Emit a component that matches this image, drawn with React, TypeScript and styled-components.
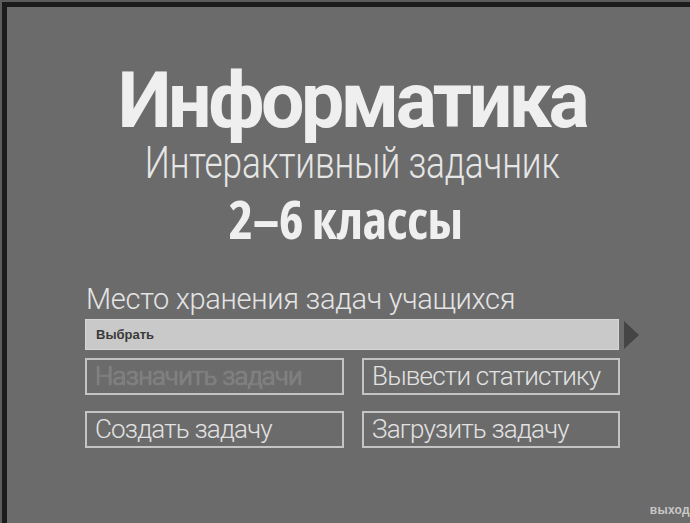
import React from "react";
import styled, { createGlobalStyle } from "styled-components";

const Global = createGlobalStyle`
  html, body { margin: 0; padding: 0; background: #4f4f4f; }
  body { width: 690px; height: 523px; overflow: hidden; }
  #root { width: 690px; height: 523px; }
`;

const Outer = styled.div`
  width: 690px;
  height: 523px;
  box-sizing: border-box;
  padding: 2px 0 0 2px;
  background: #5c5c5c;
`;

const Screen = styled.div`
  height: 100%;
  box-sizing: border-box;
  border-top: 5px solid #1b1b1b;
  border-left: 5px solid #1b1b1b;
  background: #6b6b6b;
  display: flex;
  flex-direction: column;
  font-family: Roboto, "Liberation Sans", sans-serif;
  color: #ececec;
`;

const Heading = styled.header`
  display: flex;
  flex-direction: column;
  align-items: center;
  padding-top: 55px;
  padding-left: 7px;
`;

const Title = styled.h1`
  margin: 0;
  font-size: 77px;
  font-weight: 700;
  line-height: 78px;
  letter-spacing: -3.5px;
  color: #efefef;
`;

/* light face, narrowed horizontally to the condensed look of the splash */
const Subtitle = styled.div`
  font-size: 44px;
  font-weight: 300;
  line-height: 46px;
  letter-spacing: -0.2px;
  color: #e6e6e6;
  transform: scaleX(0.8);
  transform-origin: 50% 50%;
`;

const Grades = styled.div`
  margin-top: 5px;
  margin-left: -13px;
  font-family: "Open Sans", Roboto, sans-serif;
  font-stretch: 85%;
  font-size: 53px;
  font-weight: 700;
  line-height: 56px;
  letter-spacing: -0.6px;
  color: #efefef;
`;

const Form = styled.section`
  margin: 36px 0 0 78px;
  width: 560px;
  display: flex;
  flex-direction: column;
`;

const Label = styled.div`
  font-size: 29px;
  font-weight: 300;
  line-height: 32px;
  letter-spacing: -0.3px;
  color: #e4e4e4;
  padding-left: 1px;
`;

const SelectRow = styled.div`
  margin-top: 4px;
  display: flex;
  align-items: center;
  gap: 5px;
`;

const Select = styled.div`
  width: 534px;
  height: 31px;
  box-sizing: border-box;
  background: #c9c9c9;
  border: 1px solid #d6d6d6;
  padding-left: 10px;
  display: flex;
  align-items: center;
  font-family: "Liberation Sans", Arial, sans-serif;
  font-size: 13px;
  font-weight: 700;
  color: #3a3a3a;
`;

const Arrow = styled.div`
  width: 0;
  height: 0;
  border-top: 14px solid transparent;
  border-bottom: 14px solid transparent;
  border-left: 15px solid #454545;
`;

const Buttons = styled.div`
  margin-top: 8px;
  display: grid;
  grid-template-columns: 259px 258px;
  column-gap: 18px;
  row-gap: 16px;
  width: 535px;
`;

const Button = styled.button<{ $disabled?: boolean }>`
  height: 37px;
  box-sizing: border-box;
  margin: 0;
  padding: 0 0 2px 8px;
  text-align: left;
  background: transparent;
  border: 2px solid #c4c4c4;
  font-family: Roboto, "Liberation Sans", sans-serif;
  font-size: 26px;
  font-weight: 300;
  letter-spacing: -0.8px;
  color: ${(p) => (p.$disabled ? "#7d7d7d" : "#e2e2e2")};
  text-shadow: ${(p) => (p.$disabled ? "0 0 1px #a0a0a0" : "none")};
  white-space: nowrap;
  cursor: ${(p) => (p.$disabled ? "default" : "pointer")};
`;

const Footer = styled.footer`
  margin-top: auto;
  display: flex;
  justify-content: flex-end;
  padding: 0 0 6px 0;
`;

const Exit = styled.span`
  font-family: "Liberation Sans", Arial, sans-serif;
  font-size: 12px;
  font-weight: 700;
  color: #c8c8c8;
  letter-spacing: 0.3px;
`;

export default function App() {
  return (
    <>
      <Global />
      <Outer>
        <Screen>
          <Heading>
            <Title>Информатика</Title>
            <Subtitle>Интерактивный задачник</Subtitle>
            <Grades>2–6 классы</Grades>
          </Heading>
          <Form>
            <Label>Место хранения задач учащихся</Label>
            <SelectRow>
              <Select>Выбрать</Select>
              <Arrow />
            </SelectRow>
            <Buttons>
              <Button $disabled>Назначить задачи</Button>
              <Button>Вывести статистику</Button>
              <Button>Создать задачу</Button>
              <Button>Загрузить задачу</Button>
            </Buttons>
          </Form>
          <Footer>
            <Exit>выход</Exit>
          </Footer>
        </Screen>
      </Outer>
    </>
  );
}
